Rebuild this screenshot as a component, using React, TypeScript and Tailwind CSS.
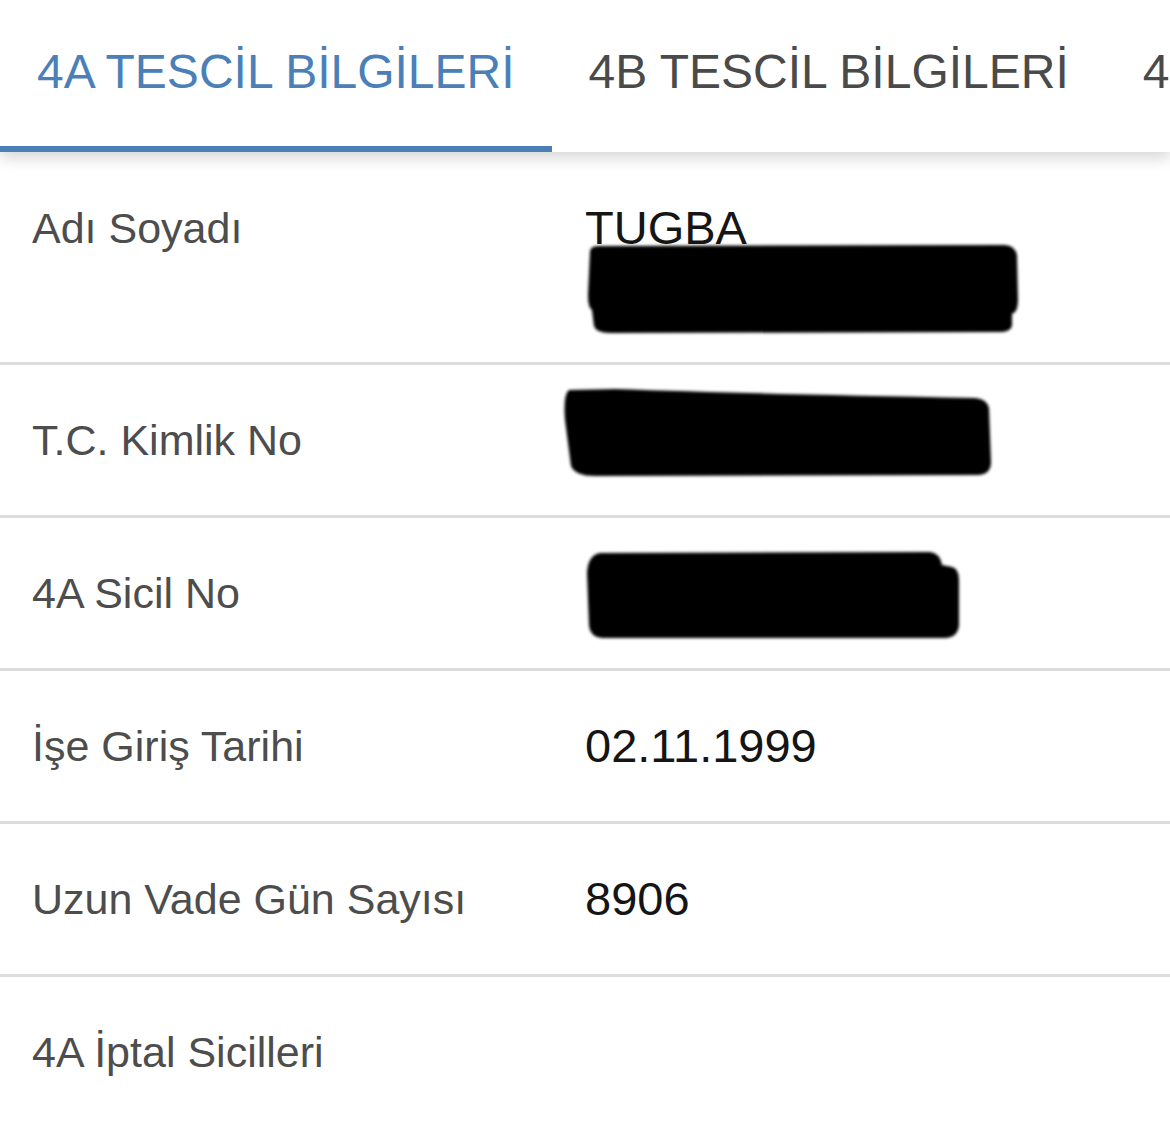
import React from "react";

const tabs = ["4A TESCİL BİLGİLERİ", "4B TESCİL BİLGİLERİ", "4C TESCİL BİLGİLERİ"];

type Row = {
  label: string;
  value?: string[];
  redact?: { left: number; top: number; w: number; h: number; d: string };
  first?: boolean;
};

const rows: Row[] = [
  {
    label: "Adı Soyadı",
    value: ["TUGBA", "\u00a0"],
    first: true,
    redact: {
      left: 580,
      top: 88,
      w: 445,
      h: 100,
      d: "M10,12 Q10,6 18,6 L425,5 Q436,6 437,16 L438,60 Q438,72 432,74 L432,86 Q430,92 420,92 L30,93 Q16,93 14,86 L12,70 Q8,68 8,55 Z",
    },
  },
  {
    label: "T.C. Kimlik No",
    value: ["\u00a0"],
    redact: {
      left: 555,
      top: 15,
      w: 445,
      h: 105,
      d: "M14,10 L60,9 Q200,14 420,18 Q432,19 434,28 L436,82 Q436,94 424,95 L40,96 Q20,96 16,86 L10,40 Q8,14 14,10 Z",
    },
  },
  {
    label: "4A Sicil No",
    value: ["\u00a0"],
    redact: {
      left: 580,
      top: 27,
      w: 390,
      h: 100,
      d: "M20,8 L350,7 Q360,8 362,20 L372,22 Q379,24 379,35 L379,80 Q378,92 366,93 L22,93 Q10,92 9,80 L7,28 Q8,10 20,8 Z",
    },
  },
  { label: "İşe Giriş Tarihi", value: ["02.11.1999"] },
  { label: "Uzun Vade Gün Sayısı", value: ["8906"] },
  { label: "4A İptal Sicilleri" },
];

const Redaction = ({ r }: { r: NonNullable<Row["redact"]> }) => (
  <svg
    className="absolute pointer-events-none"
    style={{ left: r.left, top: r.top }}
    width={r.w}
    height={r.h}
    viewBox={`0 0 ${r.w} ${r.h}`}
  >
    <defs>
      <filter id="soft" x="-5%" y="-10%" width="110%" height="120%">
        <feGaussianBlur stdDeviation="1.8" />
      </filter>
    </defs>
    <path d={r.d} fill="#000" filter="url(#soft)" />
  </svg>
);

export default function App() {
  return (
    <div
      className="w-[1170px] h-[1126px] overflow-hidden bg-white"
      style={{ fontFamily: '"Liberation Sans", Arial, sans-serif' }}
    >
      {/* Tab bar */}
      <div className="relative z-10 h-[152px] flex bg-white shadow-[0_6px_14px_rgba(0,0,0,0.16)] overflow-hidden">
        {tabs.map((t, i) => (
          <div
            key={t}
            className={`shrink-0 flex items-center px-[37px] text-[48px] leading-none whitespace-nowrap border-b-[6px] ${
              i === 0 ? "text-[#4a80b7] border-[#4a80b7]" : "text-[#4a4a4a] border-transparent"
            }`}
          >
            <span className="-mt-[2px]">{t}</span>
          </div>
        ))}
      </div>

      {/* Rows */}
      <div>
        {rows.map((row) => (
          <div
            key={row.label}
            className={`relative flex pl-[32px] border-b-[3px] border-[#dcdcdc] ${row.first ? "py-[47px]" : "py-[46px]"}`}
          >
            <div className="w-[553px] shrink-0 text-[43px] leading-[58px] text-[#4d4d4d]">{row.label}</div>
            <div className="text-[47px] leading-[58px] text-[#151515]">
              {(row.value ?? ["\u00a0"]).map((v, i) => (
                <div key={i}>{v}</div>
              ))}
            </div>
            {row.redact && <Redaction r={row.redact} />}
          </div>
        ))}
      </div>
    </div>
  );
}
